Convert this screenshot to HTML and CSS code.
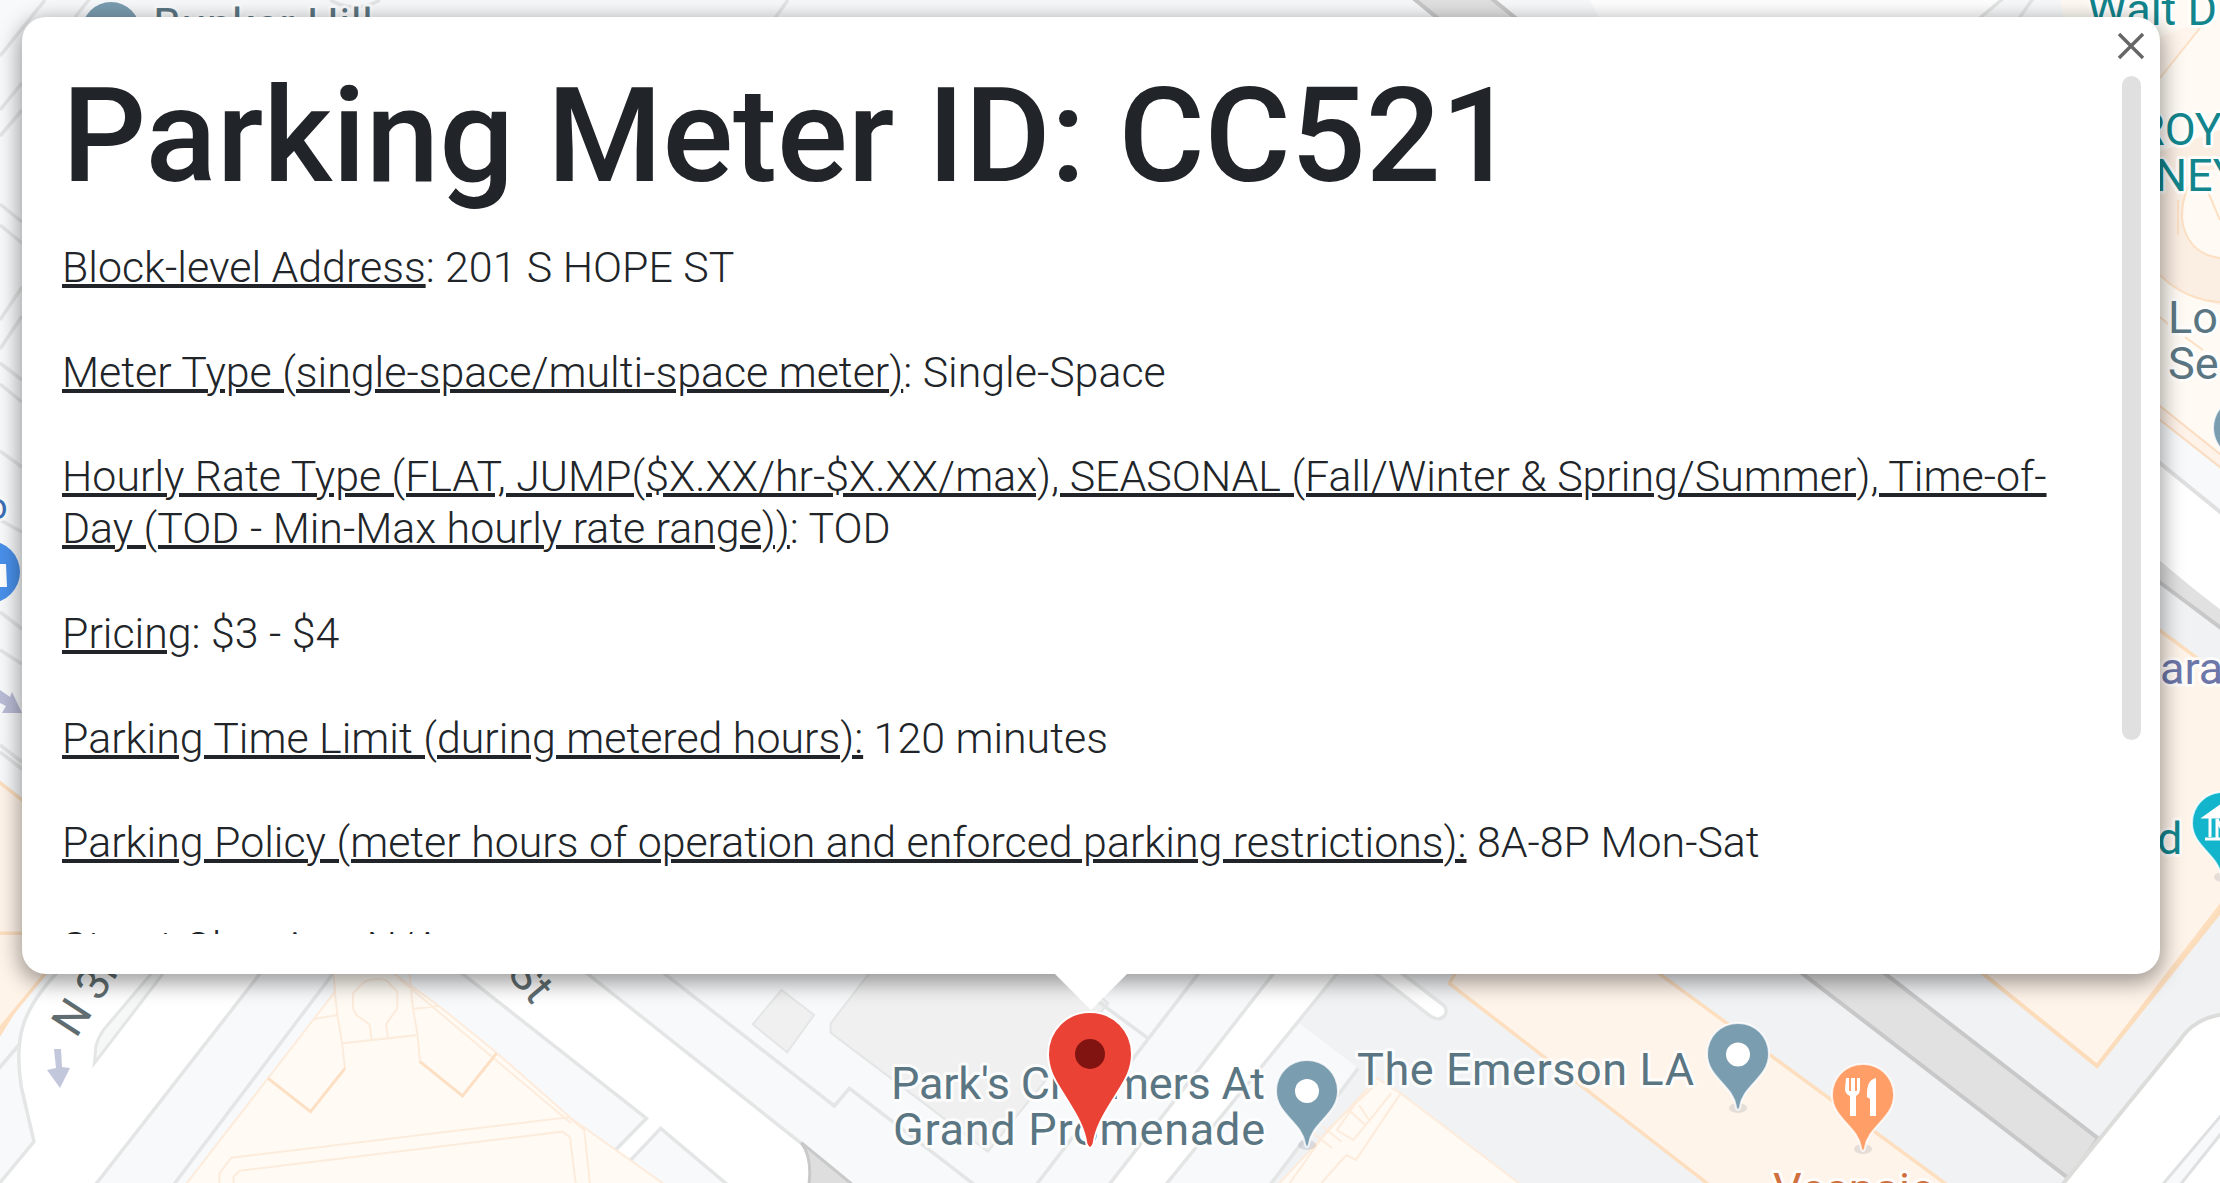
FILE: index.html
```html
<!DOCTYPE html>
<html lang="en">
<head>
<meta charset="utf-8">
<title>Parking Meter Map</title>
<link rel="stylesheet" href="styles.css">
</head>
<body>
<main class="map">
  <svg class="tiles" viewBox="0 0 2220 1183" aria-hidden="true">
    <rect width="2220" height="1183" fill="#f7f9fb"/>

    <!-- west edge streets -->
    <g class="street">
      <path d="M0 56 45 0M75 17 92-4M0 110 22 83M0 136 22 110M0 204 22 222M0 225 22 243M0 320 22 287M0 349 22 316M0 363 22 380M0 384 22 402M0 451 22 467M0 520 22 532M0 612 22 629M0 650 22 664M0 745 22 762M0 752 22 769"/>
      <path d="M330 0Q355 14 380 0"/>
      <path d="M788 0 775 18"/>
    </g>
    <path class="sand" d="M-10 775 30 806V985L-10 1050z"/>

    <!-- top edge streets -->
    <path fill="#e1e1e1" stroke="#c8c8c8" stroke-width="4" d="M1408-6 1440 20H1518L1486-6z"/>
    <path class="white" d="M1590 0H2005L1980 20H1600z"/>
    <g class="street"><path d="M2005-3 1980 18M2034-3 2018 20"/></g>

    <!-- south west blocks -->
    <g transform="translate(0 900) scale(.4719 .33333)">
      <path class="sand" d="M-10 100H160L95 222-20 420z"/>
      <g class="street">
        <path class="white" d="M140 190C40 330 30 420 45 560L72 725-10 865H195L205 849 568 190z"/>
        <path d="M40 435-5 510"/>
        <path class="kerb" d="M345 222 200 490 203 440Q208 410 222 385L320 222"/>
        <path d="M722 190 365 860"/>
        <path class="white" d="M952 190 1370 655 1225 865H1280L1400 685 1555 870H1720Q1728 770 1698 730L1210 182z"/>
        <path d="M1380 190 1768 618 1800 565 2075 865"/>
      </g>
      <g class="cream">
        <path d="M705 190 710 275 390 860H1415L1210 655 1050 455 930 318 805 190z"/>
        <path d="M708 260 715 345 725 430 885 405 875 325 868 222M665 357 715 345M875 327 930 318M768 250Q780 237 800 237T825 250L842 275V325L818 373 822 413M768 250 748 280V325L755 345 783 373 788 420M725 430 731 505 658 635 568 535M885 405 890 485 980 588 1052 460M845 235 1210 670M465 849V820L490 773 1205 652 1238 690 1250 849M495 849V830L508 812 1192 695 1208 712 1220 849"/>
        <path class="edge" d="M568 535 658 635 731 505M890 485 980 588 1052 460"/>
      </g>
    </g>

    <!-- south centre blocks -->
    <g transform="translate(740 900) scale(.4719 .33333)">
      <path fill="#dedede" stroke="#c9c9c9" stroke-width="3" d="M130 728 248 865H145Q155 775 130 728z"/>
      <path class="block" d="M1285 190 1185 370 1310 505 1120 865H1800V190z"/>
      <g class="street">
        <path class="building" d="M88 270 157 345 100 457 27 373zM290 190 192 370V398L525 755 780 310 690 190z"/>
        <path d="M745 290 865 415M988 190 622 865"/>
        <path class="white" d="M1147 190 776 865H896L1283 190z"/>
        <path d="M1310 505 1115 870"/>
        <path class="white" d="M1320 190 1460 345C1480 370 1505 350 1493 318L1375 190z"/>
      </g>
      <g class="cream">
        <path d="M1130 870 1350 535 1400 580 1670 870z"/>
        <path d="M1350 550 1245 690M1380 580 1300 720 1265 690 1320 580M1312 615 1335 665M1290 630 1325 675M1235 680 1275 725M1215 700 1255 745M1400 580 1305 780 1285 765 1232 849M1245 690 1165 849"/>
      </g>
    </g>

    <!-- south east blocks -->
    <g transform="translate(1480 900) scale(.4719 .33333)">
      <path class="block" d="M10 190H1568V870H105L-5 750z"/>
      <path class="sand" d="M-40 190-65 250-20 300 495 865H1000L350 190z"/>
      <path fill="#e1e1e1" stroke="#c8c8c8" stroke-width="4" d="M655 190 1250 838 1310 715 830 190z"/>
    </g>

    <!-- east edge blocks -->
    <g>
      <path class="creamfill" d="M2060 0H2220V460L2150 400z"/>
      <path fill="#fff5ec" d="M2150 40 2200 22V30L2150 90z"/>
      <path fill="#fbeee3" d="M2150 155 2220 130V305Q2180 295 2150 268z"/>
      <path class="creamfill" d="M2220 170C2190 165 2180 200 2182 220 2186 245 2205 257 2220 258z"/>
      <path class="peach" d="M2160 78 2200 28M2205 185 2220 220M2160 275Q2185 300 2220 302M2220 258C2195 255 2184 238 2182 218 2182 195 2190 178 2200 172M2178 200V235M2160 317 2168 324M2185 337 2203 350"/>
      <path fill="#f7f9fb" d="M2150 415 2220 470V590L2150 520z"/>
      <path fill="#fff2e8" stroke="#fbdcc0" stroke-width="2" d="M2150 398 2230 462V475L2150 412z"/>
      <path fill="#fff" stroke="#e0e0e0" stroke-width="4" d="M2150 455 2230 520V622L2150 555z"/>
      <path class="block" d="M2150 575 2230 635V900L2100 1020 2150 974z"/>
      <path fill="#e1e1e1" d="M2150 555 2225 613V632L2150 575z"/>
      <path d="M2150 575 2225 631" stroke="#c8c8c8" stroke-width="4"/>
      <path class="sand" d="M2150 623 2240 690V880L2097 1066 1960 955H2150z"/>
      <path class="block" d="M2222 909V1020L2175 1040 2097 1066z"/>
      <path d="M1960 955 2097 1066 2222 909" fill="none" stroke="#fbdcbb" stroke-width="4"/>
      <path fill="#fff" stroke="#dcdcda" stroke-width="4" d="M2225 1014Q2194 1018 2180 1040L2158 1067 2058 1190H2230z"/>
      <path fill="#f8f9fb" stroke="#dfe0e1" stroke-width="3" d="M2224 1112 2158 1190H2176L2224 1130z"/>
    </g>

    <!-- one-way arrows -->
    <path fill="#c3c7dc" d="M54 1049H61L62 1067 70 1068 60 1088 47 1070 56 1068z"/>
    <path fill="#b9bcd5" d="M0 690 10 697 12 692 22 713H2L6 706 0 703z"/>

    <!-- labels -->
    <g class="label">
      <text class="slate" x="153" y="40" textLength="220">Bunker Hill</text>
      <text class="teal" x="2087" y="24.500">Walt D</text>
      <text class="teal" x="2137" y="145">ROY</text>
      <text class="teal" x="2155" y="191">NEY</text>
      <text class="slate" x="2168" y="333">Lo</text>
      <text class="slate" x="2168" y="379">Se</text>
      <text class="violet" x="2160" y="684">ara</text>
      <text class="teal" x="2157" y="854">d</text>
      <text class="blue" x="-13" y="519" font-size="36">o</text>
      <text class="slate" x="891" y="1099" textLength="374">Park's Chalmers At</text>
      <text class="slate" x="893" y="1145" textLength="372">Grand Promenade</text>
      <text class="slate" x="1357" y="1085" textLength="337">The Emerson LA</text>
      <text class="rust" x="1773" y="1205" textLength="163">Vespaio</text>
      <text class="road" x="0" y="0" transform="translate(76 1039) rotate(-57)">N 3rd St</text>
      <text class="road" x="0" y="0" transform="translate(506 974) rotate(50)">St</text>
    </g>

    <!-- place pins -->
    <defs>
      <g id="pin"><ellipse cx="0" cy="85" rx="9" ry="5" fill="#69758a" opacity=".18"/><path stroke="#fff" stroke-opacity=".8" stroke-width="2" d="M0 0C-18 0-31 14-31 31-31 55-5 62-2 84-1 88 1 88 2 84 5 62 31 55 31 31 31 14 18 0 0 0z"/></g>
    </defs>
    <g fill="#7b9db0">
      <use href="#pin" x="1307" y="1060"/><use href="#pin" x="1738" y="1023"/><use href="#pin" x="2244" y="397"/>
      <circle cx="111" cy="31" r="29"/>
    </g>
    <g fill="#fff"><circle cx="1307" cy="1091" r="12"/><circle cx="1738" cy="1054.500" r="12"/></g>
    <use href="#pin" x="1863" y="1064" fill="#ff9e67"/>
    <path fill="#fff" d="M1846 1078h3v13h2v-13h4v13h2v-13h3v11q0 5-4 7v20h-6v-20q-5-2-5-7zM1876 1078v38h-6v-17l-3-2q-1-17 9-19z"/>
    <use href="#pin" x="2223" y="792" fill="#12b5cb"/>
    <g fill="none" stroke="#fff" stroke-width="3"><path fill="#fff" d="M2205 817 2222 805V817z"/><path d="M2205 839H2225M2210 817V837M2217 838V819L2225 836"/></g>
    <circle cx="-11" cy="572" r="31" fill="#4990ea"/>
    <path fill="#fff" d="M-10 578V567L0 570V564H6L7 587H-10z"/>
  </svg>

  <article class="info-window">
    <button class="close" aria-label="Close">
      <svg viewBox="0 0 28 28"><path d="M2 2 26 26M26 2 2 26"/></svg>
    </button>
    <div class="content">
      <h1>Parking Meter ID: CC521</h1>
      <p><u>Block-level Address</u>: 201 S HOPE ST</p>
      <p><u>Meter Type (single-space/multi-space meter)</u>: Single-Space</p>
      <p><u>Hourly Rate Type (FLAT, JUMP($X.XX/hr-$X.XX/max), SEASONAL (Fall/Winter &amp; Spring/Summer), Time-of-<br>Day (TOD - Min-Max hourly rate range))</u>: TOD</p>
      <p><u>Pricing</u>: $3 - $4</p>
      <p><u>Parking Time Limit (during metered hours):</u> 120 minutes</p>
      <p><u>Parking Policy (meter hours of operation and enforced parking restrictions):</u> 8A-8P Mon-Sat</p>
      <p><u>Street Cleaning</u>: N/A</p>
    </div>
    <div class="scroll-thumb"></div>
  </article>
  <div class="tail"></div>

  <svg class="marker" viewBox="0 0 86 140" aria-hidden="true">
    <path fill="#ea4335" stroke="#fff" stroke-width="2" d="M43 1C19 1 1 20 1 43 1 60 9 71 17 84 28 102 37 115 39.500 133Q43 141 46.500 133C49 115 58 102 69 84 77 71 85 60 85 43 85 20 67 1 43 1z"/>
    <circle cx="43" cy="43" r="15" fill="#811411"/>
  </svg>
</main>
</body>
</html>
```
FILE: styles.css
```css
body { margin: 0; font-family: Roboto, sans-serif; }
.map { position: relative; width: 2220px; height: 1183px; overflow: hidden; padding: 17px 22px 0; box-sizing: border-box; }
.tiles { position: absolute; inset: 0; width: 2220px; height: 1183px; }
.tiles path { vector-effect: non-scaling-stroke; }
.street path { fill: none; stroke: #e4e5e5; stroke-width: 3.5px; }
.street path.white, .white { fill: #fff; }
.street path.kerb { fill: #f6f7f7; stroke-width: 3px; }
.street path.building { fill: #f0f0f0; stroke-width: 2px; }
.block { fill: #f0f2f4; }
.sand { fill: #fff4ea; stroke: #fddfc0; stroke-width: 3.5px; }
.creamfill { fill: #fffbf4; }
.cream path { fill: none; stroke: #fdebdc; stroke-width: 2px; }
.cream path:first-child { fill: #fffbf4; }
.cream path.edge { stroke: #fde0c4; stroke-width: 3px; }
.peach { fill: none; stroke: #fde0c4; stroke-width: 2px; }
.label { font-size: 45px; stroke: #fff; stroke-opacity: .8; stroke-width: 6px; stroke-linejoin: round; paint-order: stroke; }
.slate { fill: #5b7683; }
.teal { fill: #12858d; }
.violet { fill: #6c76a8; }
.blue { fill: #3b6fb5; }
.rust { fill: #d0703f; }
.road { fill: #5f6d70; }

.info-window {
  position: relative; width: 2138px; height: 957px; box-sizing: border-box;
  padding: 40px 40px 40px; border-radius: 24px; background: #fff;
  box-shadow: 0 6px 21px 3px rgba(0, 0, 0, .38);
}
.content { height: 877px; width: 2040px; overflow: hidden; color: #212529; }
h1 { margin: 0 0 26px; font-size: 132px; line-height: 158px; font-weight: 500; white-space: nowrap; }
p { margin: 0 0 52.3px; font-size: 42.88px; line-height: 52.3px; font-weight: 300; white-space: nowrap; }
u { text-decoration-thickness: 4px; }
.close { position: absolute; left: 2095px; top: 15px; width: 28px; height: 28px; padding: 0; border: 0; background: none; }
.close svg { display: block; stroke: #666; stroke-width: 3.4px; }
.scroll-thumb { position: absolute; left: 2100px; top: 59px; width: 19px; height: 664px; border-radius: 10px; background: #e0e0e0; }
.tail {
  position: relative; width: 72px; height: 36px; margin-left: 1033px; background: #fff;
  clip-path: polygon(0 0, 100% 0, 50% 100%);
}
.marker { position: absolute; left: 1046.500px; top: 1011px; width: 86px; height: 140px; }
```
